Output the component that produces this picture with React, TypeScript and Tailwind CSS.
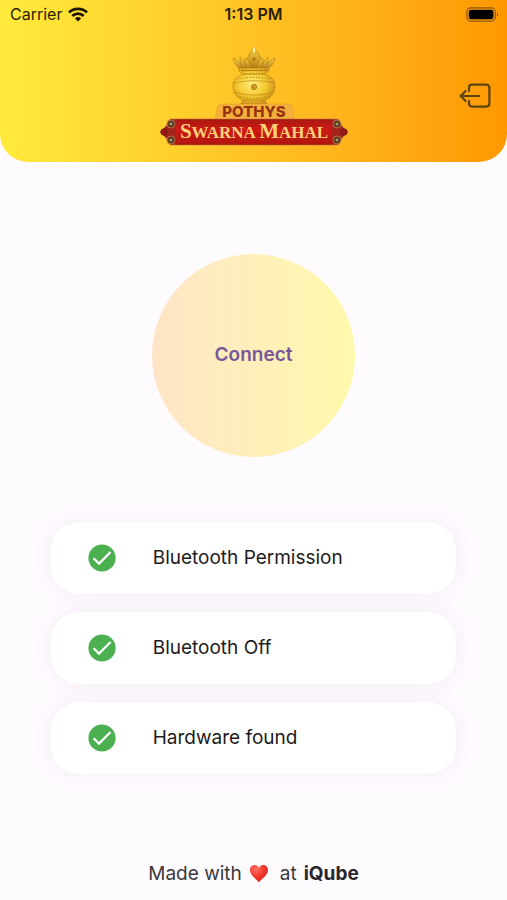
const checks = ["Bluetooth Permission", "Bluetooth Off", "Hardware found"];

function WifiIcon() {
  return (
    <svg viewBox="0 0 20 15" className="w-5 h-[15px]" fill="none" stroke="#1f1600" strokeWidth="2.8" aria-hidden="true">
      <path d="M1 5.4a13 13 0 0 1 18 0" />
      <path d="M4.3 9a8.2 8.2 0 0 1 11.4 0" />
      <path d="M10 14.6 6.9 11.4a4.5 4.5 0 0 1 6.2 0z" fill="#1f1600" stroke="none" />
    </svg>
  );
}

function BatteryIcon() {
  return (
    <svg viewBox="0 0 33 15" className="w-[33px] h-[15px]" aria-hidden="true">
      <rect x="0.9" y="0.9" width="28.4" height="13.2" rx="4" fill="none" stroke="#8a5a08" strokeWidth="1.2" />
      <rect x="2.8" y="2.7" width="24.6" height="9.6" rx="2.4" fill="#000" />
      <path d="M31 5.4c1.6.7 1.6 3.5 0 4.2z" fill="#8a5a08" />
    </svg>
  );
}

function LogoutIcon() {
  return (
    <svg
      viewBox="0 0 32 26"
      className="w-8 h-[26px]"
      fill="none"
      stroke="#5c430f"
      strokeWidth="2.2"
      strokeLinecap="round"
      strokeLinejoin="round"
      aria-hidden="true"
    >
      <path d="M10 8V4.6A3 3 0 0 1 13 1.6h14.4a3 3 0 0 1 3 3v16a3 3 0 0 1-3 3H13a3 3 0 0 1-3-3V18" />
      <path d="M20 13H1.6M6.6 8 1.6 13l5 5" />
    </svg>
  );
}

function Medallion({ x, y, r }: { x: number; y: number; r: number }) {
  return (
    <g>
      <circle cx={x} cy={y} r={r} fill="#6b3a22" stroke="#c58a54" strokeWidth="0.7" />
      <circle cx={x} cy={y} r={r * 0.5} fill="#a89a72" stroke="#3b2a1c" strokeWidth="0.8" />
    </g>
  );
}

function Logo() {
  return (
    <svg viewBox="0 0 190 100" className="w-[190px] h-[100px]" role="img" aria-label="Pothys Swarna Mahal">
      <defs>
        <radialGradient id="pot" cx="0.45" cy="0.45" r="0.62">
          <stop offset="0" stopColor="#ffee80" />
          <stop offset="0.55" stopColor="#f3c92f" />
          <stop offset="1" stopColor="#c98c18" />
        </radialGradient>
        <linearGradient id="leaf" x1="0" y1="0" x2="0" y2="1">
          <stop offset="0" stopColor="#f7d342" />
          <stop offset="1" stopColor="#b87a14" />
        </linearGradient>
        <linearGradient id="ribbon" x1="0" y1="0" x2="0" y2="1">
          <stop offset="0" stopColor="#a81a12" />
          <stop offset="0.4" stopColor="#cf1a14" />
          <stop offset="1" stopColor="#b01510" />
        </linearGradient>
      </defs>

      {/* coconut and mango leaves */}
      <g fill="url(#leaf)" stroke="#a56c12" strokeWidth="0.5">
        <path d="M95 1c-2 4-7 8-7 14 0 4 3 8 7 8s7-4 7-8c0-6-5-10-7-14z" />
        <path d="M85 23C82 17 79 14 74 12c1 5 4 9 8 12z" />
        <path d="M105 23c3-6 6-9 11-11-1 5-4 9-8 12z" />
        <path d="M88 23c-1-6-4-10-7-12 0 5 1 9 3 12z" />
        <path d="M102 23c1-6 4-10 7-12 0 5-1 9-3 12z" />
        <path d="M92 23c0-5-2-9-6-11 0 5 1 8 3 11z" />
        <path d="M98 23c0-5 2-9 6-11 0 5-1 8-3 11z" />
      </g>
      <path d="m95 0 1.4 4L95 7l-1.4-3z" fill="#fff3a8" />
      <circle cx="95" cy="13" r="1.5" fill="#a86c10" />

      {/* pot */}
      <path
        d="M81 22h28c1.500 1 1.500 3 0 4l-4 2c7 2 11 6 11 12 0 7-4 12-10 14l2 4H82l2-4c-6-2-10-7-10-14 0-6 4-10 11-12l-4-2c-1.500-1-1.500-3 0-4z"
        fill="url(#pot)"
        stroke="#b57b14"
        strokeWidth="0.6"
      />
      <path d="M82 24.5h26M85 28h20" fill="none" stroke="#a56c12" strokeWidth="0.8" />
      <path d="M75 37c12-3 28-3 40 0M76 46c11 4 27 4 38 0M84 54h22" fill="none" stroke="#b57b14" strokeWidth="0.6" />
      <path d="M79 33c9-2 23-2 32 0M79 50c9 3 23 3 32 0" fill="none" stroke="#a56c12" strokeWidth="1" strokeDasharray="1 2" />
      <circle cx="95" cy="41" r="2.6" fill="#e0a92a" stroke="#99610d" strokeWidth="0.8" />
      <circle cx="95" cy="41" r="0.8" fill="#8d550c" />

      {/* upper plate */}
      <path d="M62 58h68c2 0 4 3 4 6l1 10H56l2-10c0-3 2-6 4-6z" fill="#f5b03c" stroke="#e19c30" strokeWidth="0.6" />
      <text x="95" y="71" textAnchor="middle" fontSize="15" fill="#963511" className="font-['Inter',sans-serif] font-extrabold">
        POTHYS
      </text>

      {/* ribbon */}
      <path d="M11 73h168l4 7 6 6-6 6-4 7H11l-4-7-6-6 6-6z" fill="#a3241d" stroke="#b78045" strokeWidth="0.7" />
      <path d="M17 73.5h156v25H17z" fill="url(#ribbon)" />
      <Medallion x={12} y={78} r={4} />
      <Medallion x={12} y={94} r={4} />
      <Medallion x={178} y={78} r={4} />
      <Medallion x={178} y={94} r={4} />
      <circle cx="5" cy="86" r="3.2" fill="#9b1714" stroke="#5c2016" strokeWidth="0.7" />
      <circle cx="185" cy="86" r="3.2" fill="#9b1714" stroke="#5c2016" strokeWidth="0.7" />
      <text x="95" y="92" textAnchor="middle" fontSize="17" fill="#fbd277" className="font-['Liberation_Serif',serif] font-bold">
        <tspan fontSize="21">S</tspan>WARNA <tspan fontSize="21">M</tspan>AHAL
      </text>
    </svg>
  );
}

function CheckIcon() {
  return (
    <svg viewBox="0 0 28 28" className="w-7 h-7" aria-hidden="true">
      <circle cx="14" cy="14" r="13.6" fill="#4caf50" />
      <path d="m5.6 14.2 5.4 5.4L22.6 8" fill="none" stroke="#fff" strokeWidth="2.2" />
    </svg>
  );
}

function Heart() {
  return (
    <svg viewBox="0 0 20 19" className="w-5 h-[19px]" role="img" aria-label="love">
      <defs>
        <radialGradient id="heart" cx="0.35" cy="0.25" r="0.8">
          <stop offset="0" stopColor="#ff7262" />
          <stop offset="0.5" stopColor="#f23b30" />
          <stop offset="1" stopColor="#d81f1c" />
        </radialGradient>
      </defs>
      <path
        d="M10 18.5C8.5 15.5 1 12 1 6.1 1 3.2 3 1 5.6 1 7.6 1 9.2 2.2 10 4c.8-1.8 2.4-3 4.4-3C17 1 19 3.2 19 6.1c0 5.9-7.500 9.400-9 12.400z"
        fill="url(#heart)"
      />
    </svg>
  );
}

export default function App() {
  return (
    <div className="min-h-screen flex flex-col bg-[#fefbff] font-['Inter',sans-serif] text-[#1d1b20]">
      <header className="rounded-b-[28px] bg-linear-to-r from-[#ffeb3b] to-[#ff9800] pb-4">
        <div className="grid grid-cols-3 items-center h-7 px-2 text-[#2b2000]">
          <div className="flex items-center gap-1.5 pl-0.5 text-base">
            Carrier <WifiIcon />
          </div>
          <div className="text-center text-base font-semibold">1:13 PM</div>
          <div className="flex justify-end">
            <BatteryIcon />
          </div>
        </div>
        <div className="grid grid-cols-[1fr_auto_1fr] items-center px-4 pt-[18px]">
          <div />
          <Logo />
          <button type="button" aria-label="Log out" className="justify-self-end">
            <LogoutIcon />
          </button>
        </div>
      </header>

      <main className="flex-1 flex flex-col items-center pt-[92px]">
        <button
          type="button"
          className="w-2/5 aspect-square rounded-full bg-linear-to-r from-[#ffe5c7] to-[#fef9ac] text-[19px] font-semibold text-[#76579a]"
        >
          Connect
        </button>

        <ul className="w-4/5 mt-[65px] flex flex-col gap-[18px]">
          {checks.map((label) => (
            <li
              key={label}
              className="flex items-center gap-[37px] h-[72px] px-[37px] rounded-[28px] bg-white text-[19px] shadow-[0_0_20px_4px_#f6f0f6]"
            >
              <CheckIcon />
              {label}
            </li>
          ))}
        </ul>
      </main>

      <footer className="flex items-center justify-center gap-[7px] pb-3 text-[19px] text-[#3a383d]">
        Made with <Heart />
        <span className="pl-1">at</span>
        <strong className="font-bold text-[#29272c]">iQube</strong>
      </footer>
    </div>
  );
}
